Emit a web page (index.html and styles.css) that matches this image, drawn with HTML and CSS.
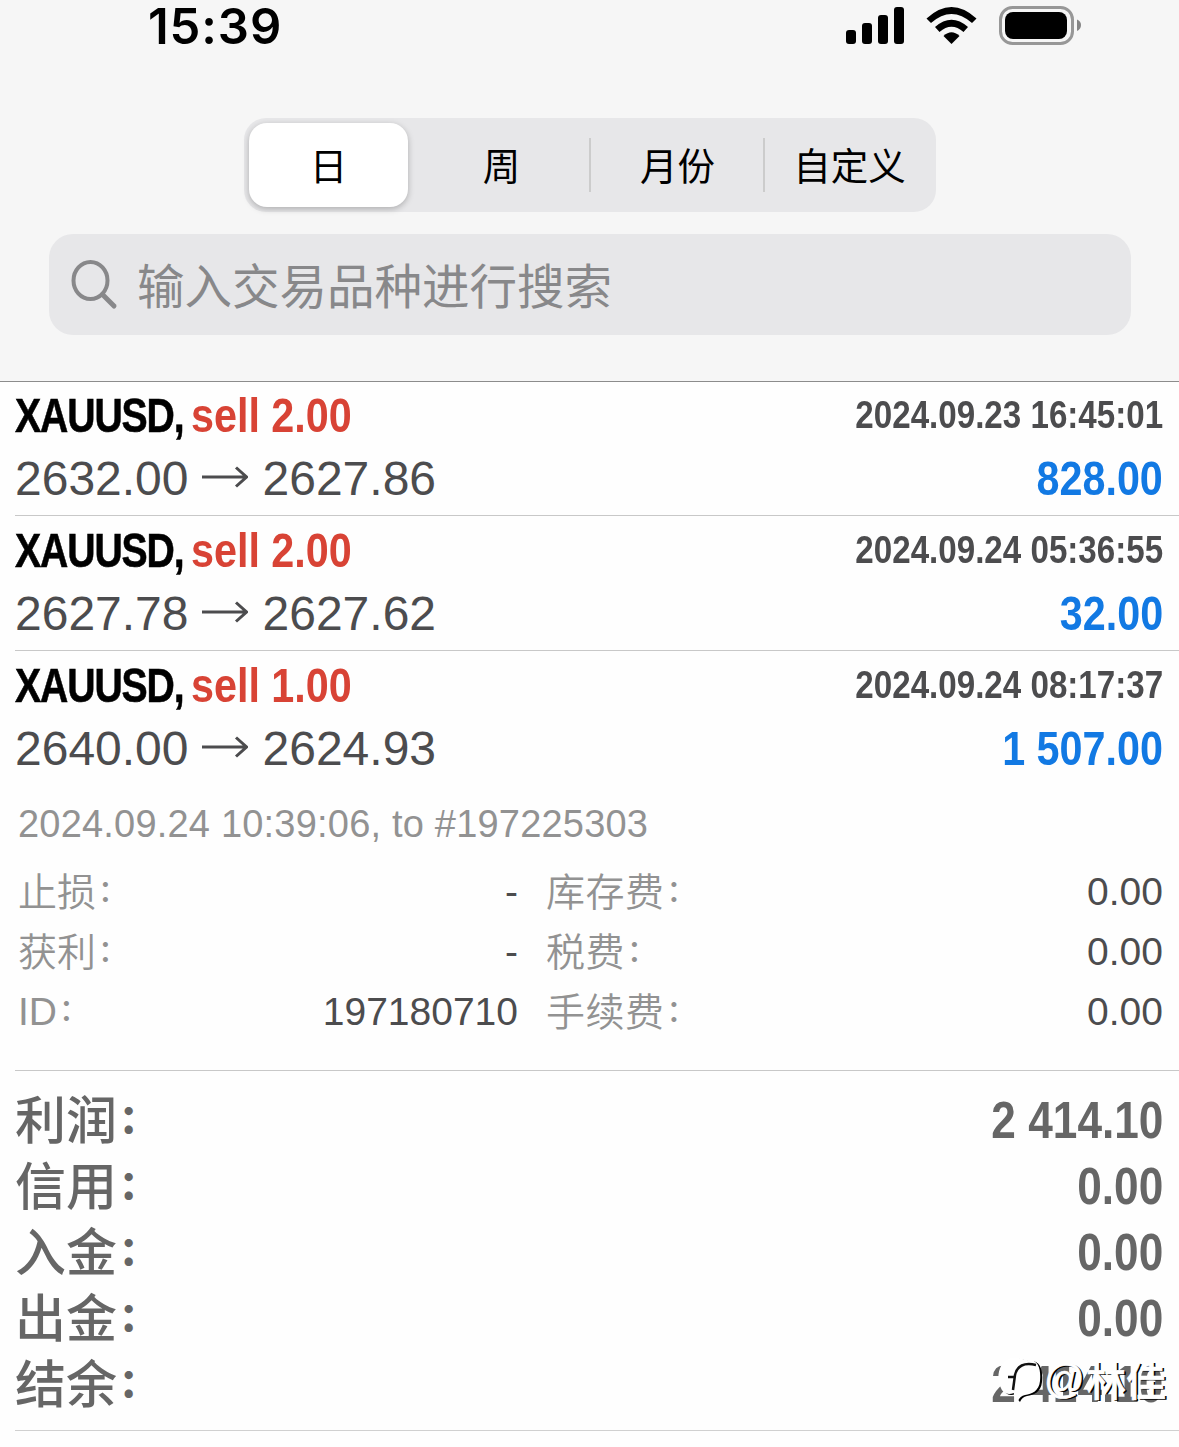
FILE: index.html
```html
<!DOCTYPE html>
<html lang="zh-CN">
<head>
    <meta charset="UTF-8">
    <meta name="viewport" content="width=device-width, initial-scale=1.0">
    <title>History</title>
    <link rel="stylesheet" href="styles.css">
</head>
<body>
    <header class="header">
        <div class="status">
            <span class="time">15:39</span>
            <svg class="status-icons" width="240" height="48" viewBox="0 0 240 48">
                <rect x="5" y="30" width="10" height="14" rx="3"/>
                <rect x="21" y="23" width="10" height="21" rx="3"/>
                <rect x="37" y="15" width="10" height="29" rx="3"/>
                <rect x="53" y="7" width="10" height="37" rx="3"/>
                <path d="M85.500 18.500Q110.500-4.500 135.500 18.500L131 23Q110.500 5 90 23Z"/>
                <path d="M94 27Q110.500 12.500 127 27L122.500 32Q110.500 21.500 98.500 32Z"/>
                <path d="M102.500 36Q110.500 28.500 118.500 36L110.500 44Z"/>
                <rect x="159.500" y="7.500" width="72" height="36" rx="12" fill="none" stroke="#979797" stroke-width="3"/>
                <rect x="164" y="12" width="62" height="27" rx="8"/>
                <path d="M236 19.500Q240 21 240 25T236 31Z" fill="#858585"/>
            </svg>
        </div>
        <nav class="tabs">
            <span class="tab active">日</span>
            <span class="tab">周</span>
            <span class="tab divided">月份</span>
            <span class="tab divided">自定义</span>
        </nav>
        <div class="search">
            <svg width="50" height="50" viewBox="0 0 50 50" fill="none" stroke="#88888a" stroke-linecap="round">
                <ellipse cx="19.500" cy="20.500" rx="17" ry="18.500" stroke-width="4"/>
                <path d="M31.500 34.500L43 46" stroke-width="5"/>
            </svg>
            <span class="placeholder">输入交易品种进行搜索</span>
        </div>
    </header>

    <main>
        <section class="deal">
            <div class="line">
                <span class="symbol narrow">XAUUSD,</span>
                <span class="side narrow">sell 2.00</span>
                <span class="date narrow">2024.09.23 16:45:01</span>
            </div>
            <div class="line">
                <span class="price">2632.00</span>
                <svg class="arrow" width="46" height="24" viewBox="0 0 46 24"><path d="M0 12H44M34 2.500L44.500 12L34 21.500"/></svg>
                <span class="price">2627.86</span>
                <span class="profit narrow">828.00</span>
            </div>
        </section>
        <section class="deal">
            <div class="line">
                <span class="symbol narrow">XAUUSD,</span>
                <span class="side narrow">sell 2.00</span>
                <span class="date narrow">2024.09.24 05:36:55</span>
            </div>
            <div class="line">
                <span class="price">2627.78</span>
                <svg class="arrow" width="46" height="24" viewBox="0 0 46 24"><path d="M0 12H44M34 2.500L44.500 12L34 21.500"/></svg>
                <span class="price">2627.62</span>
                <span class="profit narrow">32.00</span>
            </div>
        </section>
        <section class="deal open">
            <div class="line">
                <span class="symbol narrow">XAUUSD,</span>
                <span class="side narrow">sell 1.00</span>
                <span class="date narrow">2024.09.24 08:17:37</span>
            </div>
            <div class="line">
                <span class="price">2640.00</span>
                <svg class="arrow" width="46" height="24" viewBox="0 0 46 24"><path d="M0 12H44M34 2.500L44.500 12L34 21.500"/></svg>
                <span class="price">2624.93</span>
                <span class="profit narrow">1 507.00</span>
            </div>
            <p class="comment">2024.09.24 10:39:06, to #197225303</p>
            <div class="details">
                <span class="label">止损<i>：</i></span><span class="value">-</span>
                <span class="label">库存费<i>：</i></span><span class="value">0.00</span>
                <span class="label">获利<i>：</i></span><span class="value">-</span>
                <span class="label">税费<i>：</i></span><span class="value">0.00</span>
                <span class="label id">ID<i>：</i></span><span class="value">197180710</span>
                <span class="label">手续费<i>：</i></span><span class="value">0.00</span>
            </div>
        </section>

        <section class="totals">
            <div class="total"><span>利润<i>：</i></span><b class="narrow">2 414.10</b></div>
            <div class="total"><span>信用<i>：</i></span><b class="narrow">0.00</b></div>
            <div class="total"><span>入金<i>：</i></span><b class="narrow">0.00</b></div>
            <div class="total"><span>出金<i>：</i></span><b class="narrow">0.00</b></div>
            <div class="total">
                <span>结余<i>：</i></span><b class="narrow">2 414.10</b>
                <div class="watermark">
                    <svg width="46" height="48" viewBox="0 0 46 48">
                        <path class="bubble" d="M14 1C22 0 28 4 31 3C41 3 43 13 42 24C41 34 34 37 27 38Q22 39 20 44Q15 39 16 36Q6 40 2 29C-2 20 1 3 14 1Z"/>
                        <path class="mark" d="M38 8Q20 4 17 18L15 33M10 20H17"/>
                    </svg>
                    <span class="at">@</span><span>林佳</span>
                </div>
            </div>
        </section>
    </main>
</body>
</html>
```
FILE: styles.css
```css
body {
    margin: 0;
    background-color: #fefefe;
    font-family: "Liberation Sans", "Noto Sans CJK SC", sans-serif;
    color: #4c4c4e;
}

i {
    font-style: normal;
}

.header {
    box-sizing: border-box;
    height: 382px;
    background-color: #f6f6f6;
    border-bottom: 1px solid #8c8c8c;
}

.status {
    display: flex;
    justify-content: space-between;
    height: 118px;
    padding: 0 98px 0 148px;
}

.time {
    font: 600 49px/54px Inter, sans-serif;
    letter-spacing: .9px;
    color: #000;
}

.status-icons {
    overflow: visible;
    width: 240px;
}

.tabs {
    box-sizing: border-box;
    display: grid;
    grid-template-columns: 159px 181px 174px 1fr;
    width: 692px;
    height: 94px;
    margin-left: 244px;
    padding: 5px;
    border-radius: 22px;
    background-color: #e7e7e9;
}

.tab {
    display: flex;
    align-items: center;
    justify-content: center;
    padding-bottom: 3px;
    font-size: 37.500px;
    color: #000;
}

.tab:nth-child(2) {
    padding-left: 6px;
}

.tab:nth-child(3) {
    padding-left: 3px;
}

.tab:nth-child(4) {
    padding-left: 5px;
}

.tab.active {
    background-color: #fff;
    border-radius: 18px;
    box-shadow: 0 2px 6px rgba(0, 0, 0, .25);
}

.divided {
    background: linear-gradient(#ccc, #ccc) 0 50% / 2px 54px no-repeat;
}

.search {
    box-sizing: border-box;
    display: flex;
    align-items: center;
    width: 1082px;
    height: 101px;
    margin: 22px 0 0 49px;
    padding-left: 22px;
    border-radius: 24px;
    background-color: #e7e7e9;
}

.placeholder {
    margin: -3px 0 0 16px;
    font-size: 47.500px;
    color: #88888a;
}

/* condensed bold text, squeezed toward its own edge */
.narrow {
    font-weight: bold;
    white-space: nowrap;
    transform: scaleX(.86);
    transform-origin: right;
}

.deal {
    box-sizing: border-box;
    height: 135px;
    margin-left: 15px;
    padding: 2px 16px 0 0;
    border-bottom: 1px solid #c8c8c8;
}

.deal:first-child {
    height: 134px;
    padding-top: 1px;
}

.deal.open {
    height: 420px;
}

.line {
    display: flex;
    align-items: center;
    height: 64px;
    font-size: 48px;
}

.line:nth-child(2) {
    margin-top: -1px;
}

.symbol {
    width: 176px;
    font-size: 49px;
    letter-spacing: -1.400px;
    color: #000;
    -webkit-text-stroke: .6px #000;
    transform: scaleX(.8);
    transform-origin: left;
}

.side {
    color: #d84335;
    transform-origin: left;
}

.date {
    margin-left: auto;
    font-size: 39px;
    transform: scaleX(.85);
}

.profit {
    margin-left: auto;
    color: #1279e3;
}

.arrow {
    margin: -2px 15px 0 13px;
    fill: none;
    stroke: #4c4c4e;
    stroke-width: 3;
}

.comment {
    margin: 14px 0 0 3px;
    font-size: 38px;
    line-height: 60px;
    letter-spacing: .2px;
    color: #929292;
}

.details {
    display: grid;
    grid-template-columns: 100px 400px 214px 431px;
    grid-auto-rows: 60px;
    align-items: center;
    margin: 8px 0 0 3px;
    font-size: 39px;
}

.label {
    padding-bottom: 7px;
    font-weight: 350;
    white-space: nowrap;
    color: #929292;
}

.label.id {
    padding-bottom: 1px;
}

.label:nth-child(4n + 3) {
    margin-left: 28px;
    letter-spacing: .5px;
}

.value {
    text-align: right;
}

.label i,
.total i {
    position: relative;
    top: -5px;
    left: 2px;
    font-size: .76em;
    font-weight: 500;
}

.totals {
    margin-left: 15px;
    padding: 16px 16px 13px 0;
    border-bottom: 1px solid #d0d0d0;
    color: #666;
}

.total {
    position: relative;
    display: flex;
    align-items: center;
    justify-content: space-between;
    height: 66px;
    font-size: 51px;
    font-weight: 500;
}

.total > span {
    padding-bottom: 7px;
}

.total i {
    top: -6px;
    left: 2px;
    font-weight: 900;
}

.total .narrow {
    font-size: 52px;
    transform: scaleX(.85);
}

.watermark {
    position: absolute;
    right: -3px;
    top: 6px;
    display: flex;
    align-items: center;
    height: 48px;
    font-size: 40px;
    font-weight: 500;
    color: #fff;
    text-shadow: 2px 1px 0 #000;
    -webkit-text-stroke: .7px #fff;
}

.watermark span {
    margin-top: -4px;
}

.at {
    width: 42px;
}

.bubble {
    fill: #fff;
    filter: drop-shadow(2px 1px 0 #000);
}

.mark {
    fill: none;
    stroke: #111;
    stroke-width: 2.500;
}
```
